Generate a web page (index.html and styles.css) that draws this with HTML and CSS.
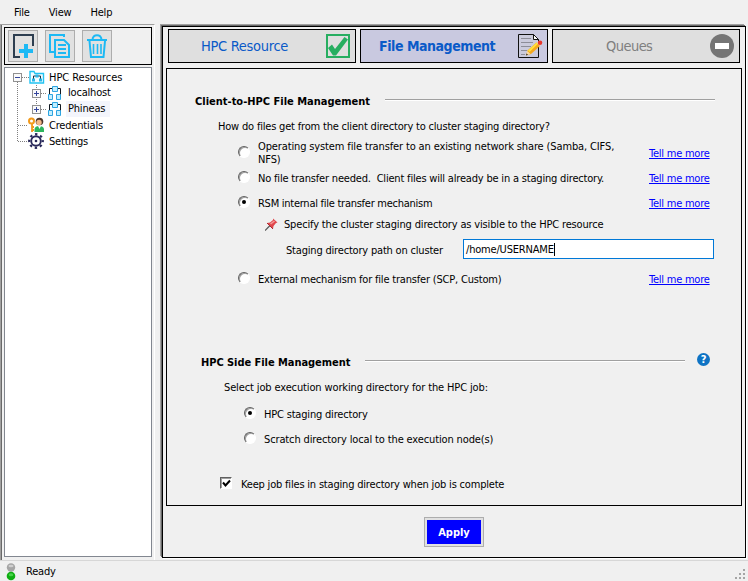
FILE: index.html
```html
<!DOCTYPE html>
<html lang="en">
<head>
<meta charset="utf-8">
<title>HPC Resources</title>
<link rel="stylesheet" href="styles.css">
</head>
<body>
<div class="app">
  <nav class="menubar"><span>File</span><span>View</span><span>Help</span></nav>
  <main class="main">
    <aside class="side">
      <div class="toolbar">
        <button class="tool"><svg width="28" height="30" viewBox="0 0 28 30" fill="none"><path d="M11 26H5V4H24V15" stroke="#2d3e50" stroke-width="2"/><path d="M17 13v14M10 20h14" stroke="#1db9f4" stroke-width="4"/></svg></button>
        <button class="tool"><svg width="28" height="30" viewBox="0 0 28 30" fill="none" stroke="#1db9f4" stroke-width="2"><path d="M8 21H4V4H18V6"/><path d="M9 9H18L23 14V26H9z"/><path d="M12 14h8M12 18h8M12 22h8"/></svg></button>
        <button class="tool"><svg width="28" height="30" viewBox="0 0 28 30" fill="none" stroke="#1db9f4" stroke-width="2"><path d="M4 9H24M6.500 10L8 26H20.500L22 10M9.500 9C9.500 2.500 18.500 2.500 18.500 9"/><path d="M10.500 13v10M14.500 13v10M18 13v10" stroke-width="1.600"/></svg></button>
      </div>
      <div class="tree">
        <svg class="lines" width="60" height="86" viewBox="5 68 60 86" fill="none" stroke="#808080" stroke-dasharray="1 1">
          <path d="M17.500 82V141M22 77.500H29M36.500 85V105M41 93.500H47M41 109.500H47M18 125.500H28M18 141.500H28"/>
        </svg>
        <div class="node">
          <i class="exp minus"></i>
          <svg class="ico" width="16" height="16" viewBox="0 0 16 16"><path d="M1 14V2.500H5L6 4.500H14.500V14z" fill="#f2fcff" stroke="#22c3f2" stroke-width="1.400"/><path d="M4.500 10V7H11.500V10" fill="none" stroke="#203040"/><path d="M6.500 5.500h3v3h-3zM3 9.500h3v3H3zM10 9.500h3v3h-3z" fill="#29b6e8"/></svg>
          <span>HPC Resources</span>
        </div>
        <div class="node sub">
          <i class="exp"></i>
          <svg class="ico" width="16" height="16" viewBox="0 0 16 16"><path d="M5.500 3.500H2.500V10M10 3.500H13.500V10" fill="none" stroke="#101820"/><path d="M5.500 1.500h5v5h-5zM1.500 9.500h4v5h-4zM9.500 9.500h4v5h-4z" fill="#c4efff" stroke="#2da4e0"/></svg>
          <span>localhost</span>
        </div>
        <div class="node sub">
          <i class="exp"></i>
          <svg class="ico" width="16" height="16" viewBox="0 0 16 16"><path d="M5.500 3.500H2.500V10M10 3.500H13.500V10" fill="none" stroke="#101820"/><path d="M5.500 1.500h5v5h-5zM1.500 9.500h4v5h-4zM9.500 9.500h4v5h-4z" fill="#c4efff" stroke="#2da4e0"/></svg>
          <span class="sel">Phineas</span>
        </div>
        <div class="node leaf">
          <svg class="ico" width="16" height="16" viewBox="0 0 16 16"><path d="M6.500 15V12Q7 9 11 9Q15.500 9 16 12V15z" fill="#2db55e"/><circle cx="11.500" cy="4.500" r="3.800" fill="#4b352a"/><circle cx="11" cy="5.500" r="2.700" fill="#f3b987"/><path d="M10 9h3l-1.500 3z" fill="#fff"/><circle cx="3.500" cy="4" r="2.500" fill="none" stroke="#f29a1c" stroke-width="2"/><path d="M4 7V15M4 10h2M4 13h2" stroke="#f29a1c" stroke-width="1.800"/></svg>
          <span>Credentials</span>
        </div>
        <div class="node leaf">
          <svg class="ico" width="16" height="16" viewBox="0 0 16 16" fill="none" stroke="#28285a"><circle cx="8" cy="8" r="6.800" stroke-width="2.200" stroke-dasharray="2.400 2.940" stroke-dashoffset="1.200"/><circle cx="8" cy="8" r="4.800" stroke-width="1.900"/><circle cx="8" cy="8" r="1.300" fill="#28285a" stroke="none"/></svg>
          <span>Settings</span>
        </div>
      </div>
    </aside>
    <section class="frame">
      <div class="tabs">
        <div class="tab"><span class="t1">HPC Resource</span>
          <svg width="24" height="24" viewBox="0 0 24 24"><path d="M1 1H23V23H1z" fill="none" stroke="#27ae60" stroke-width="2"/><path d="M2 14L6 10.500L9 15L18.500 3L22 5.500L10 21.500H7z" fill="#27ae60"/></svg>
        </div>
        <div class="tab active"><span class="t2">File Management</span>
          <svg width="25" height="24" viewBox="0 0 25 24"><path d="M.5.5H15.500L20.500 5.500V23.500H.5z" fill="#cbcbdc" stroke="#111"/><path d="M15.500.5V5.500H20.500z" fill="#fff" stroke="#111"/><path d="M3 4.500h10M3 8.500h12M3 12.500h10M3 16.500h6M3 20.500h4" stroke="#8d8d98"/><path d="M8 21.500L9.500 16.500L19 8L22.500 11.500L13 20z" fill="#f6a81c"/><path d="M10 16.500L19 8.200L20.300 9.500L11.500 18z" fill="#ffe13a"/><path d="M8 21.500L9.300 17L12.500 20z" fill="#f7d9a5"/><path d="M8 21.500l.6-2 1.400 1.300z" fill="#222"/><path d="M18.500 8.500L20 7L23.500 10.500L22 12z" fill="#d9d9e8"/><circle cx="22" cy="8.800" r="2.300" fill="#e8352a"/></svg>
        </div>
        <div class="tab"><span class="t3">Queues</span>
          <svg width="24" height="24" viewBox="0 0 24 24"><circle cx="12" cy="12" r="12" fill="#757575"/><path d="M5 9H19V15H5z" fill="#fff"/></svg>
        </div>
      </div>
      <div class="panel">
        <div class="row head h1"><b>Client-to-HPC File Management</b><i class="rule"></i></div>
        <div class="row question">How do files get from the client directory to cluster staging directory?</div>
        <div class="row opt tall"><i class="radio"></i><span class="label wide">Operating system file transfer to an existing network share (Samba, CIFS, NFS)</span><a class="more">Tell me more</a></div>
        <div class="row opt second"><i class="radio"></i><span class="label">No file transfer needed.&nbsp; Client files will already be in a staging directory.</span><a class="more">Tell me more</a></div>
        <div class="row opt third"><i class="radio on"></i><span class="label tight">RSM internal file transfer mechanism</span><a class="more">Tell me more</a></div>
        <div class="row hint"><svg width="13" height="13" viewBox="0 0 13 13"><path d="M0 12.500L5 7.500" stroke="#555" stroke-width="1.200"/><path d="M2 5L5 4.500L8 2L8 .5L12.500 4.500L11 5L8.500 8L8 11z" fill="#e0474c"/><path d="M5 5.500L9 2.500L10 3.500L6 6.500z" fill="#f59a9a"/><path d="M2 5L8 11" stroke="#a82a33"/></svg><span>Specify the cluster staging directory as visible to the HPC resource</span></div>
        <div class="row staging"><span>Staging directory path on cluster</span><div class="input">/home/USERNAME<i class="caret"></i></div></div>
        <div class="row opt fourth"><i class="radio"></i><span class="label">External mechanism for file transfer (SCP, Custom)</span><a class="more">Tell me more</a></div>
        <div class="row head h2"><b>HPC Side File Management</b><i class="rule"></i>
          <span class="help">?</span></div>
        <div class="row select">Select job execution working directory for the HPC job:</div>
        <div class="row opt sidea"><i class="radio on"></i><span class="label">HPC staging directory</span></div>
        <div class="row opt sideb"><i class="radio"></i><span class="label wide">Scratch directory local to the execution node(s)</span></div>
        <div class="row keep"><i class="check"><svg width="9" height="9" viewBox="0 0 9 9"><path d="M1 3.500L3.500 6.500L8 1.500" fill="none" stroke="#000" stroke-width="2"/></svg></i><span>Keep job files in staging directory when job is complete</span></div>
      </div>
      <button class="apply">Apply</button>
    </section>
  </main>
  <footer class="status">
    <svg width="10" height="18" viewBox="0 0 10 18"><circle cx="5" cy="4.500" r="4.200" fill="#a5a5a5"/><ellipse cx="5" cy="3" rx="2.500" ry="1.300" fill="#cfcfcf"/><circle cx="5" cy="13" r="4.300" fill="#0fae12"/><ellipse cx="5" cy="11.800" rx="2.300" ry="1.500" fill="#49d34a"/></svg>
    <span>Ready</span>
    <svg class="grip" width="11" height="11" viewBox="0 0 11 11"><path d="M8 0h2v2H8zM4 4h2v2H4zM8 4h2v2H8zM0 8h2v2H0zM4 8h2v2H4zM8 8h2v2H8z" fill="#a5a5a5"/></svg>
  </footer>
</div>
</body>
</html>
```
FILE: styles.css
```css
* { box-sizing: border-box; }
body { margin: 0; background: #f0f0f0; color: #000; font: 11px/13px "DejaVu Sans Condensed", "DejaVu Sans", sans-serif; letter-spacing: -0.19px; }
i { font-style: normal; }
svg { display: block; flex: none; }
button { font: inherit; color: inherit; padding: 0; }
.app { width: 748px; height: 581px; display: flex; flex-direction: column; overflow: hidden; }

.menubar { height: 24px; display: flex; align-items: center; gap: 19px; padding-left: 14px; }

.main { height: 536px; display: flex; border-left: 1px solid #a0a0a0; box-shadow: inset 1px 0 #696969; }
.side { width: 154px; padding: 2px 2px 2px 3px; border-top: 1px solid #a0a0a0; border-right: 1px solid #fff; display: flex; flex-direction: column; }
.toolbar { width: 148px; height: 38px; border: 1px solid #000; padding: 2px 0 0 3px; display: flex; gap: 7px; margin-bottom: 2px; }
.tool { width: 30px; height: 32px; background: #e1e1e1; border: 1px solid #adadad; }
.tree { width: 148px; height: 490px; border: 1px solid #828790; background: #fff; position: relative; padding-top: 1px; }
.lines { position: absolute; left: 0; top: 0; }
.node { height: 16px; display: flex; align-items: center; padding-left: 8px; position: relative; }
.node.sub { padding-left: 27px; }
.node.leaf { padding-left: 23px; }
.node:first-of-type { letter-spacing: -0.05px; }
.exp { width: 9px; height: 9px; margin-right: 7px; border: 1px solid #919191; background: linear-gradient(#35469c, #35469c) center / 5px 1px no-repeat, linear-gradient(#35469c, #35469c) center / 1px 5px no-repeat, #fafafa; }
.exp.minus { background: linear-gradient(#35469c, #35469c) center / 5px 1px no-repeat, #fafafa; }
.sub .exp { margin-right: 6px; }
.node span { margin-left: 4px; }
.sub span { margin-left: 3px; padding: 1px 5px 2px 2px; }
.leaf span { margin-left: 5px; }
.sel { background: #f3f5fc; }

.frame { width: 584px; height: 532px; margin: 2px 0 0 7px; border: 1px solid #000; box-shadow: -1px -1px #696969, -2px -2px #a0a0a0, 1px 1px #fff; }
.tabs { display: flex; gap: 4px; padding: 2px 0 0 5px; }
.tab { width: 188px; height: 34px; border: 1px solid #000; background: #dfdfdf; display: flex; align-items: center; justify-content: space-between; color: #0a5ac8; font-size: 14.5px; line-height: 18px; letter-spacing: -0.3px; padding-right: 5px; }
.tab.active { background: #c9c9e0; font-weight: bold; font-size: 14px; letter-spacing: -0.45px; padding-right: 4px; }
.tab:last-child { color: #808080; letter-spacing: -0.55px; }
.t1 { margin-left: 32px; }
.t2 { margin-left: 18px; }
.t3 { margin-left: 53px; }

.panel { width: 576px; height: 438px; margin: 5px 0 0 3px; border: 1px solid #000; padding-top: 24px; }
.row { height: 16px; display: flex; align-items: center; white-space: nowrap; }
.head { letter-spacing: 0; }
.rule { height: 2px; background: linear-gradient(#a0a0a0 50%, #fff 50%); margin-top: -2px; }
.h1 { padding-left: 28px; }
.h1 b { width: 190px; }
.h1 .rule { width: 330px; }
.question { margin-top: 9px; padding-left: 51px; }
.opt { padding-left: 71px; }
.radio { width: 12px; height: 12px; flex: none; border-radius: 50%; background: #fff; border: 1px solid; border-color: #606060 #fff #fff #606060; box-shadow: inset 1px 1px #a0a0a0; margin: -2px 8px 0 0; display: flex; align-items: center; justify-content: center; }
.radio.on::after { content: ""; width: 4px; height: 4px; border-radius: 50%; background: #000; }
.label { width: 391px; }
.label.wide { letter-spacing: -0.13px; }
.label.tight { letter-spacing: -0.26px; }
.more { color: #00f; text-decoration: underline; letter-spacing: -0.23px; }
.tall { height: 26px; margin-top: 6px; }
.tall .label { white-space: normal; padding-right: 25px; }
.second { margin-top: 4px; }
.third { margin-top: 9px; }
.hint { margin-top: 5px; padding-left: 98px; letter-spacing: -0.16px; }
.hint span { margin-left: 6px; }
.staging { margin-top: 7px; height: 20px; padding-left: 119px; }
.staging span { width: 177px; padding-top: 2px; }
.input { width: 251px; height: 20px; background: #fff; border: 1px solid #0078d7; padding-left: 2px; display: flex; align-items: center; }
.caret { width: 1px; height: 13px; background: #000; }
.fourth { margin-top: 12px; }
.h2 { margin-top: 67px; padding-left: 34px; }
.h2 b { width: 164px; letter-spacing: -0.05px; }
.h2 .rule { width: 320px; }
.help { width: 13px; height: 13px; border-radius: 50%; background: #0e73c4; color: #fff; font-weight: bold; text-align: center; margin: -5px 0 0 12px; }
.select { margin-top: 9px; padding-left: 57px; letter-spacing: -0.13px; }
.sidea { margin-top: 11px; padding-left: 77px; }
.sideb { margin-top: 9px; padding-left: 77px; }
.keep { margin-top: 29px; padding-left: 53px; }
.check { width: 12px; height: 12px; background: #fff; border: 1px solid; border-color: #606060 #fff #fff #606060; box-shadow: inset 1px 1px #a0a0a0; margin: -2px 9px 0 0; padding: 1px; }

.apply { display: block; width: 60px; height: 30px; margin: 11px 0 0 261px; border: 1px solid #adadad; background: #00f; box-shadow: inset 0 0 0 2px #e1e1e1; color: #fff; font-weight: bold; letter-spacing: 0; }

.status { height: 21px; display: flex; align-items: center; padding: 1px 2px 0 6px; border-top: 1px solid #d7d7d7; }
.status span { margin-left: 10px; }
.grip { margin: 5px 0 0 auto; }
```
